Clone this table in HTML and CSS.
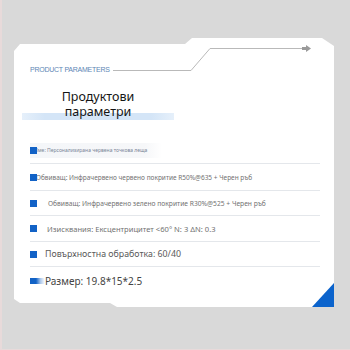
FILE: index.html
```html
<!DOCTYPE html>
<html>
<head>
<meta charset="utf-8">
<link rel="stylesheet" href="styles.css">
</head>
<body>
<div class="frame">
  <div class="card">
    <div class="top-line"></div>
    <svg class="deco" width="320" height="40" viewBox="0 0 320 40">
      <polyline points="99,32.5 177,32.5 196,10.5 289,10.5" fill="none" stroke="#b9b9b9" stroke-width="1"/>
      <rect x="288" y="9" width="5" height="3" fill="#9a9a9a"/>
      <polygon points="292,7 297,10.5 292,14" fill="#9a9a9a"/>
    </svg>
    <div class="label">PRODUCT PARAMETERS</div>
    <div class="title">Продуктови<br>параметри</div>
    <div class="rows">
      <div class="row r1"><span class="sq"></span><span class="t t1">Име: Персонализирана червена точкова леща</span></div>
      <div class="row r2"><span class="sq"></span><span class="t t2">Обвиващ: Инфрачервено червено покритие R50%@635 + Черен ръб</span></div>
      <div class="row r3"><span class="sq"></span><span class="t t3">Обвиващ: Инфрачервено зелено покритие R30%@525 + Черен ръб</span></div>
      <div class="row r4"><span class="sq"></span><span class="t t4">Изисквания: Ексцентрицитет &lt;60° N: 3 ΔN: 0.3</span></div>
      <div class="row r5"><span class="sq"></span><span class="t t5">Повърхностна обработка: 60/40</span></div>
      <div class="row r6"><span class="sq sq6"></span><span class="t t6">Размер: 19.8*15*2.5</span></div>
    </div>
    <div class="corner"></div>
  </div>
</div>
</body>
</html>
```

FILE: styles.css
```css
html, body {
  margin: 0;
  padding: 0;
}
body {
  width: 350px;
  height: 350px;
  background: #d9d9d9;
  overflow: hidden;
}
.frame {
  width: 350px;
  height: 350px;
  box-sizing: border-box;
  border-left: 2px solid #e8dada;
  border-bottom: 1px solid #e8dada;
  padding: 38px 0 0 12px;
}
.card {
  position: relative;
  width: 320px;
  height: 269px;
  box-sizing: border-box;
  background: #ffffff;
  padding: 0 14px 0 16px;
  font-family: "Noto Sans", "Open Sans", sans-serif;
  clip-path: polygon(0 13px, 6px 6px, 171px 6px, 178px 0, 308px 0, 320px 8px, 320px 269px, 103px 269px, 96px 265px, 6px 265px, 0 261px);
}
.top-line {
  position: absolute;
  left: 18px;
  top: 4px;
  width: 153px;
  height: 2px;
  background: #2f6fc0;
}
.deco {
  position: absolute;
  left: 0;
  top: 0;
}
.label {
  padding-top: 28px;
  height: 8px;
  line-height: 8px;
  font-family: "Liberation Sans", Arial, sans-serif;
  font-size: 7px;
  letter-spacing: -0.25px;
  color: #5d86b5;
}
.title {
  margin: 16px 0 0 -8px;
  width: 152px;
  height: 30px;
  text-align: center;
  font-size: 12.5px;
  line-height: 14.5px;
  color: #151515;
  background: linear-gradient(90deg, rgba(205,225,246,0.5) 0%, #d4e5f7 15%, #d4e5f7 85%, rgba(205,225,246,0.5) 100%) bottom / 100% 7px no-repeat;
}
.rows {
  margin-top: 17px;
}
.row {
  display: flex;
  align-items: center;
  border-bottom: 1px solid #e4e7eb;
  white-space: nowrap;
}
.r1 { height: 26px; background: linear-gradient(90deg, #f4f6f9 0, #f6f7f9 115px, rgba(255,255,255,0) 132px) 0 50% / 100% 15px no-repeat; }
.r2 { height: 26px; }
.r3 { height: 24px; }
.r4 { height: 25px; }
.r5 { height: 24px; }
.r6 { height: 27px; border-bottom: none; }
.sq {
  flex: none;
  width: 7px;
  height: 7px;
  background: #1262c6;
  position: relative;
  z-index: 1;
}
.sq6 {
  width: 15px;
  height: 6px;
  background: linear-gradient(90deg, #1262c6 0, #1262c6 40%, rgba(18,98,198,0.35) 70%, rgba(18,98,198,0) 100%);
}
.t {
  color: #727272;
}
.t1 {
  font-size: 5px;
  margin-left: -3px;
  color: #7a8597;
}
.t2 {
  font-size: 6.5px;
  margin-left: -1px;
}
.t3 {
  font-size: 6.7px;
  margin-left: 11px;
}
.t4 {
  font-size: 7.6px;
  margin-left: 10px;
}
.t5 {
  font-size: 8.8px;
  margin-left: 8px;
  color: #5a5a5a;
}
.t6 {
  font-size: 10px;
  margin-left: 0;
  color: #444;
}
.corner {
  position: absolute;
  right: 0;
  bottom: 0;
  width: 22px;
  height: 24px;
  background: #0b63cc;
  clip-path: polygon(100% 0, 100% 100%, 0 100%);
}
```
